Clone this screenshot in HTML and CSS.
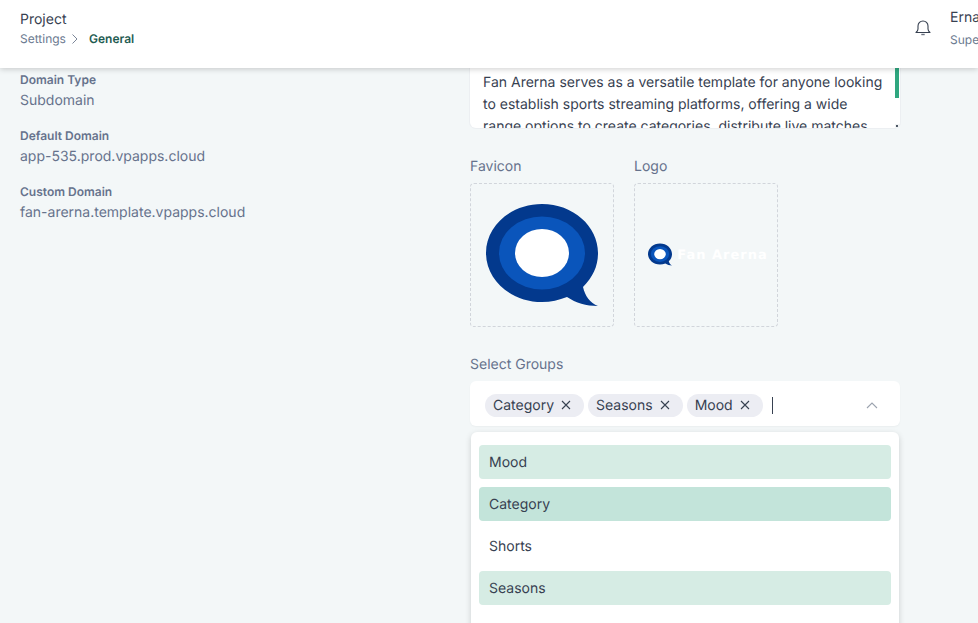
FILE: index.html
```html
<!DOCTYPE html>
<html lang="en">
<head>
    <meta charset="UTF-8">
    <meta name="viewport" content="width=device-width, initial-scale=1.0">
    <title>Project Settings</title>
    <link rel="stylesheet" href="styles.css">
</head>
<body>
    <header class="topbar">
        <div class="crumbs">
            <div class="page-title">Project</div>
            <div class="breadcrumb">
                <span>Settings</span>
                <svg class="crumb-arrow" width="8" height="12" viewBox="0 0 8 12" fill="none"><path d="M1.500 1.500 6 6l-4.500 4.500" stroke="#7b8698" stroke-width="1"/></svg>
                <span class="crumb-current">General</span>
            </div>
        </div>
        <div class="user-area">
            <svg class="bell" width="18" height="18" viewBox="0 0 18 18" fill="none"><path d="M2 13.500c1.200-1 2-2 2-3.500V7a5 5 0 0 1 10 0v3c0 1.500.8 2.500 2 3.500Z" stroke="#374151" stroke-width="1.100" stroke-linejoin="round"/><path d="M7.300 15.500h3.400" stroke="#6b7280" stroke-width="1.400"/></svg>
            <div class="user-text">
                <div class="user-name">Erna</div>
                <div class="user-role">Super Admin</div>
            </div>
        </div>
    </header>

    <main class="content">
        <section class="domain-col">
            <div class="info-item">
                <div class="info-label">Domain Type</div>
                <div class="info-value">Subdomain</div>
            </div>
            <div class="info-item">
                <div class="info-label">Default Domain</div>
                <div class="info-value">app-535.prod.vpapps.cloud</div>
            </div>
            <div class="info-item">
                <div class="info-label">Custom Domain</div>
                <div class="info-value">fan-arerna.template.vpapps.cloud</div>
            </div>
        </section>

        <section class="form-col">
            <div class="desc-box">
                <p>Fan Arerna serves as a versatile template for anyone looking to establish sports streaming platforms, offering a wide range options to create categories, distribute live matches</p>
                <div class="scroll-thumb"></div>
                <div class="resize-grip"></div>
            </div>

            <div class="uploads">
                <div class="upload">
                    <div class="field-label">Favicon</div>
                    <div class="drop-box">
                        <svg width="112" height="102" viewBox="0 0 112 102">
                            <path d="M56 0C87 0 112 22 112 49c0 13-5 24-15 34 2 9 7 16 15 19-12 0-22-3-31-9-8 3-16 5-25 5C25 98 0 76 0 49S25 0 56 0Z" fill="#03398d"/>
                            <ellipse cx="56" cy="49" rx="43" ry="36.500" fill="#0a55bb"/>
                            <ellipse cx="56" cy="49" rx="27" ry="24" fill="#fff"/>
                        </svg>
                    </div>
                </div>
                <div class="upload">
                    <div class="field-label">Logo</div>
                    <div class="drop-box">
                        <div class="brand">
                            <svg width="24" height="23" viewBox="0 0 112 102">
                                <path d="M56 0C87 0 112 22 112 49c0 13-5 24-15 34 2 9 7 16 15 19-12 0-22-3-31-9-8 3-16 5-25 5C25 98 0 76 0 49S25 0 56 0Z" fill="#03398d"/>
                                <ellipse cx="56" cy="49" rx="43" ry="36.500" fill="#0a55bb"/>
                                <ellipse cx="56" cy="49" rx="27" ry="24" fill="#fff"/>
                            </svg>
                            <span class="brand-name">Fan Arerna</span>
                        </div>
                    </div>
                </div>
            </div>

            <div class="groups">
                <div class="field-label">Select Groups</div>
                <div class="select-box">
                    <span class="chip">Category <svg class="chip-x" width="10" height="10" viewBox="0 0 10 10"><path d="M1 1l8 8M9 1 1 9" stroke="#374151" stroke-width="1.100"/></svg></span>
                    <span class="chip">Seasons <svg class="chip-x" width="10" height="10" viewBox="0 0 10 10"><path d="M1 1l8 8M9 1 1 9" stroke="#374151" stroke-width="1.100"/></svg></span>
                    <span class="chip">Mood <svg class="chip-x" width="10" height="10" viewBox="0 0 10 10"><path d="M1 1l8 8M9 1 1 9" stroke="#374151" stroke-width="1.100"/></svg></span>
                    <span class="caret"></span>
                    <svg class="chevron" width="12" height="7" viewBox="0 0 12 7" fill="none"><path d="M1 6l5-5 5 5" stroke="#9ca3af" stroke-width="1.100"/></svg>
                </div>
                <ul class="menu">
                    <li class="opt selected">Mood</li>
                    <li class="opt active">Category</li>
                    <li class="opt">Shorts</li>
                    <li class="opt selected">Seasons</li>
                </ul>
            </div>
        </section>
    </main>
</body>
</html>
```

FILE: styles.css
```css
* {
    box-sizing: border-box;
}
html, body {
    height: 100%;
}
body {
    margin: 0;
    height: 623px;
    overflow: hidden;
    font-family: Inter, "Liberation Sans", sans-serif;
    font-size: 14px;
    color: #374151;
    background-color: #f3f7f8;
    text-rendering: geometricPrecision;
}

/* Top bar */
.topbar {
    position: relative;
    z-index: 5;
    height: 68px;
    display: flex;
    justify-content: space-between;
    padding: 11px 0 0 20px;
    background-color: #fff;
    box-shadow: 0 1px 6px rgba(0, 0, 0, 0.2);
}
.page-title {
    font-size: 14px;
    line-height: 17px;
    color: #374151;
}
.breadcrumb {
    display: flex;
    align-items: center;
    margin-top: 3px;
    font-size: 12px;
    line-height: 16px;
    color: #6b7a90;
}
.crumb-arrow {
    margin: 0 10px 0 5px;
}
.crumb-current {
    font-size: 12px;
    font-weight: 600;
    color: #1f5c52;
}
.user-area {
    display: flex;
    width: 64px;
    overflow: hidden;
    flex-shrink: 0;
}
.bell {
    margin: 8px 18px 0 0;
    flex-shrink: 0;
}
.user-text {
    margin-top: -2px;
    white-space: nowrap;
}
.user-name {
    line-height: 17px;
}
.user-role {
    margin-top: 6px;
    font-size: 12px;
    line-height: 16px;
    color: #6b7a90;
}

/* Page body */
.content {
    display: flex;
}
.domain-col {
    width: 470px;
    padding: 4px 0 0 20px;
}
.info-item {
    margin-bottom: 17px;
}
.info-label {
    font-size: 12px;
    font-weight: 600;
    line-height: 16px;
    color: #66728c;
}
.info-value {
    margin-top: 2px;
    line-height: 21px;
    color: #66728c;
}
.form-col {
    width: 430px;
}

/* Description */
.desc-box {
    position: relative;
    height: 60px;
    padding: 3.500px 13px 0;
    overflow: hidden;
    background-color: #fff;
    border-radius: 0 0 6px 6px;
    box-shadow: 0 0 0 1px #eceff2;
}
.desc-box p {
    margin: 0;
    line-height: 22px;
    color: #374151;
}
.scroll-thumb {
    position: absolute;
    top: 0;
    right: 1px;
    width: 4px;
    height: 30px;
    background-color: #2fa77f;
}
.resize-grip {
    position: absolute;
    right: 1px;
    bottom: 0;
    width: 4px;
    height: 4px;
    background: radial-gradient(circle at 2px 2px, #4b5563 1px, #f1f3f4 1px);
}

/* Uploads */
.uploads {
    display: flex;
    gap: 20px;
    margin-top: 30px;
}
.field-label {
    line-height: 17px;
    color: #66728c;
}
.drop-box {
    width: 144px;
    height: 144px;
    margin-top: 8px;
    display: flex;
    align-items: center;
    justify-content: center;
    border: 1px dashed #d1d5db;
    border-radius: 4px;
}
.brand {
    display: flex;
    align-items: center;
    gap: 5px;
    margin: -2px 0 0 4px;
}
.brand-name {
    margin-top: 3px;
    font-family: "DejaVu Sans", sans-serif;
    font-size: 13px;
    font-weight: 700;
    line-height: 18px;
    letter-spacing: 1px;
    color: #fff;
    white-space: nowrap;
}

/* Groups select */
.groups {
    position: relative;
    margin-top: 29px;
}
.select-box {
    display: flex;
    align-items: center;
    height: 45px;
    margin-top: 8px;
    padding: 4px 15px 0;
    background-color: #fff;
    border-radius: 6px;
    box-shadow: 0 1px 2px rgba(0, 0, 0, 0.04);
}
.chip {
    display: flex;
    align-items: center;
    gap: 7px;
    height: 23px;
    margin-right: 4px;
    padding: 0 13px 0 8px;
    background-color: #ecedf3;
    border-radius: 12px;
    white-space: nowrap;
}
.chip-x {
    margin-top: -1px;
}
.caret {
    width: 1px;
    height: 17px;
    margin-left: 5px;
    background-color: #374151;
}
.chevron {
    margin-left: auto;
    margin-right: 7px;
}
.menu {
    position: absolute;
    top: 76px;
    left: 1px;
    width: 428px;
    height: 230px;
    margin: 0;
    padding: 13px 8px;
    list-style: none;
    background-color: #fff;
    border-radius: 6px;
    box-shadow: 0 2px 6px rgba(0, 0, 0, 0.16);
}
.opt {
    height: 34px;
    margin-bottom: 8px;
    padding-left: 10px;
    line-height: 36px;
    border-radius: 4px;
    color: #374151;
}
.selected {
    background-color: #d6ece4;
}
.active {
    background-color: #c3e4da;
}
```
